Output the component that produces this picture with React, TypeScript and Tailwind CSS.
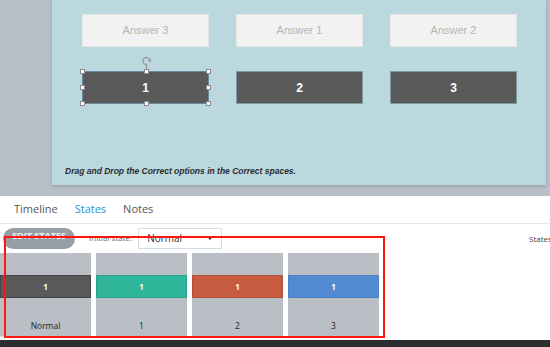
import React from "react";

const Handle = ({ className }: { className: string }) => (
  <span
    className={`absolute w-[5px] h-[5px] bg-white border border-[#8a8a8a] ${className}`}
  />
);

const thumbs = [
  { label: "Normal", color: "bg-[#595959] border-[#444]" },
  { label: "1", color: "bg-[#2fb59a] border-[#2aa38a]" },
  { label: "2", color: "bg-[#c65b40] border-[#b14f37]" },
  { label: "3", color: "bg-[#528bd1] border-[#4a80c2]" },
];

export default function App() {
  return (
    <div className="relative w-[550px] h-[347px] overflow-hidden bg-white font-['Liberation_Sans',Arial,sans-serif]">
      {/* stage area */}
      <div className="h-[196px] bg-[#b9bfc6] pl-[52px]">
        <div className="w-[494px] h-[185px] bg-[#bbd8df] shadow-[0_2px_3px_rgba(0,0,0,0.15)] pt-[14px] pl-[30px] flex flex-col">
          <div className="grid grid-cols-[127px_127px_127px] gap-x-[27px] gap-y-[24px]">
            {["Answer 3", "Answer 1", "Answer 2"].map((a) => (
              <div
                key={a}
                className="h-[33px] bg-[#f2f2f2] border border-[#e4e6e6] flex items-center justify-center text-[11px] text-[#b5b5b5]"
              >
                {a}
              </div>
            ))}
            {["1", "2", "3"].map((n, i) => (
              <div
                key={n}
                className={`relative h-[33px] bg-[#595959] flex items-center justify-center text-[12px] font-bold text-white ${
                  i === 0 ? "border border-[#6b8aa0]" : "border border-[#7d9ba3]"
                }`}
              >
                {n}
                {i === 0 && (
                  <>
                    <Handle className="-left-[3px] -top-[3px]" />
                    <Handle className="left-[61px] -top-[3px]" />
                    <Handle className="-right-[3px] -top-[3px]" />
                    <Handle className="-left-[3px] top-[13px]" />
                    <Handle className="-right-[3px] top-[13px]" />
                    <Handle className="-left-[3px] -bottom-[3px]" />
                    <Handle className="left-[61px] -bottom-[3px]" />
                    <Handle className="-right-[3px] -bottom-[3px]" />
                    <svg
                      className="absolute left-[58px] -top-[17px]"
                      width="12"
                      height="15"
                      viewBox="0 0 12 15"
                      fill="none"
                      stroke="#9a9a9a"
                      strokeWidth="1.3"
                    >
                      <path d="M5.5 14 V9.5 A3.5 3.5 0 1 1 9 6" />
                      <path d="M7.2 5.5 L9.2 6.3 L10 4.2" />
                    </svg>
                  </>
                )}
              </div>
            ))}
          </div>
          <p className="mt-[61px] -ml-[17px] text-[8.5px] italic font-bold text-[#2a2a2a]">
            Drag and Drop the Correct options in the Correct spaces.
          </p>
        </div>
      </div>

      {/* timeline / states panel */}
      <div className="font-['Open_Sans',sans-serif]">
        <div className="h-[28px] flex items-center gap-[17px] pl-[14px] border-b border-[#e6e8ea] text-[11px] text-[#555]">
          <span>Timeline</span>
          <span className="text-[#2a8fd6]">States</span>
          <span>Notes</span>
        </div>
        <div className="h-[28px] flex items-center pl-[3px] relative">
          <div className="w-[72px] h-[21px] rounded-full bg-[#979ea5] flex items-center justify-center text-[9px] font-bold text-[#eef0f2] overflow-hidden">
            <span className="-mt-[5px]">EDIT STATES</span>
          </div>
          <span className="ml-[14px] text-[8px] text-[#666]">Initial state:</span>
          <div className="ml-[6px] w-[84px] h-[21px] border border-[#d9dde0] flex items-center justify-between pl-[8px] pr-[8px] text-[10px] text-[#333]">
            <span>Normal</span>
            <span className="w-0 h-0 border-l-[3px] border-r-[3px] border-t-[4px] border-l-transparent border-r-transparent border-t-[#222]" />
          </div>
          <span className="absolute left-[529px] top-[9px] text-[8px] text-[#444] whitespace-nowrap">States</span>
        </div>
        <div className="flex gap-[5px] h-[84px] mt-[1px]">
          {thumbs.map((t) => (
            <div
              key={t.label}
              className="w-[91px] bg-[#b9bfc5] border-b border-[#cfe3e6] flex flex-col"
            >
              <div
                className={`mt-[22px] h-[23px] border flex items-center justify-center text-[8px] font-bold text-white ${t.color}`}
              >
                1
              </div>
              <div className="mt-auto mb-[3px] text-center text-[8.5px] text-[#222]">
                {t.label}
              </div>
            </div>
          ))}
        </div>
        <div className="h-[3px]" />
        <div className="h-[10px] bg-[#2d2d30]" />
      </div>

      {/* annotation box */}
      <div className="absolute left-[4px] top-[236px] w-[381px] h-[102px] border-2 border-[#ff1414]" />
    </div>
  );
}
